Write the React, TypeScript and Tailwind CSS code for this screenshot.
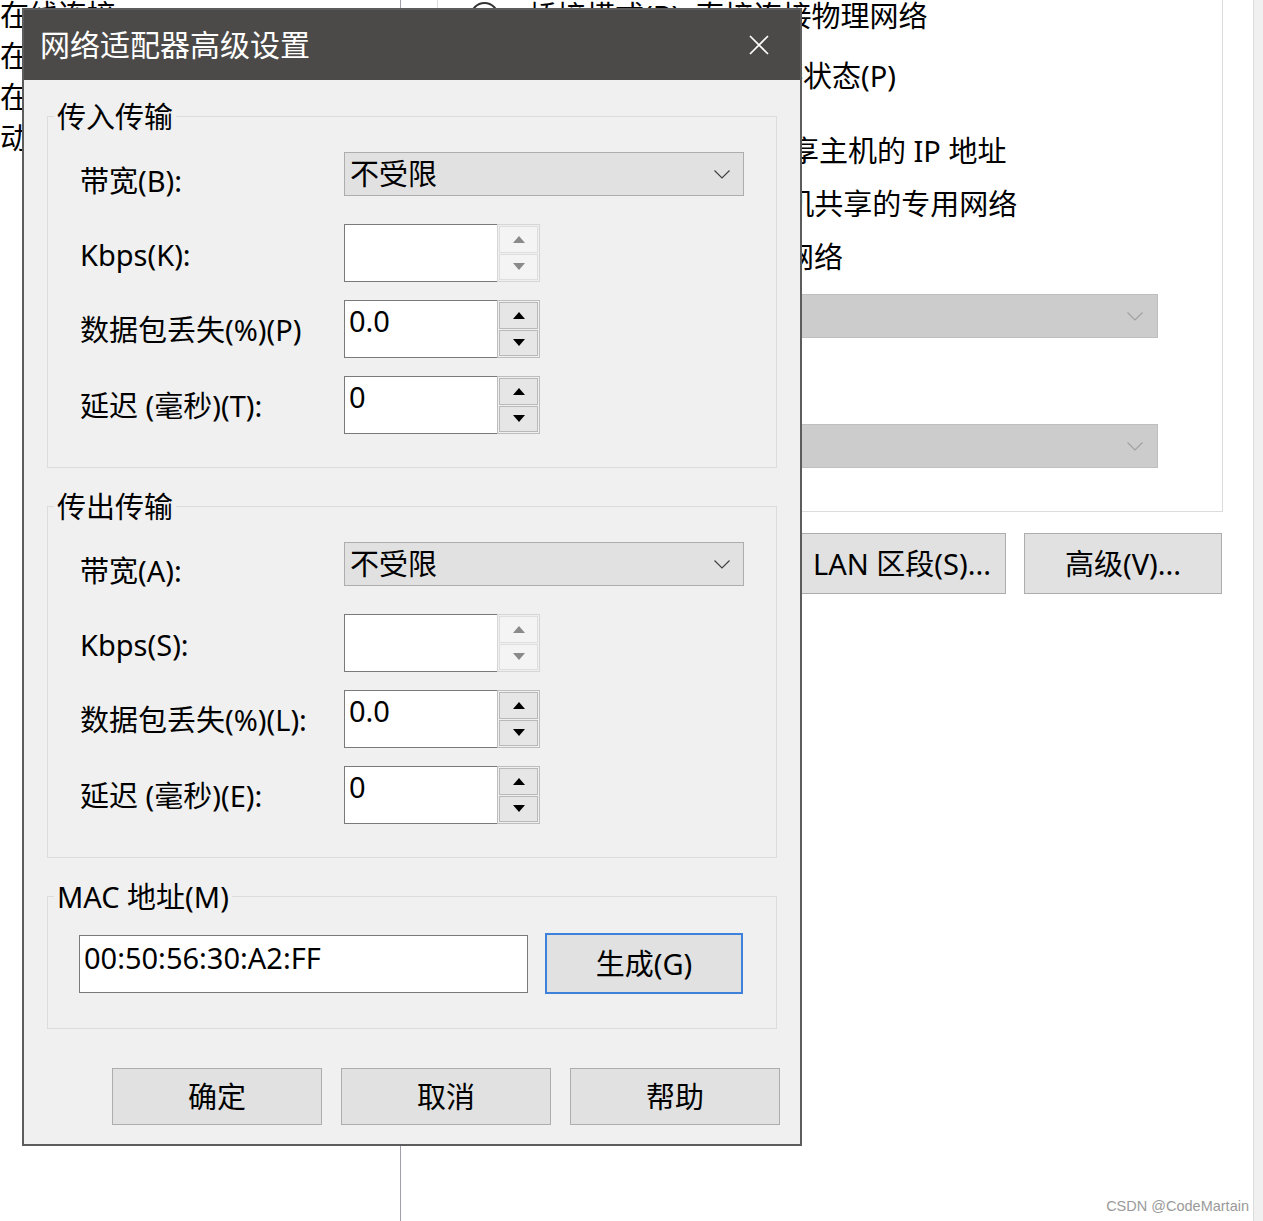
import type { ReactNode } from "react";

const labelCls = "w-[264px] shrink-0 text-[29px] leading-[38px] text-black whitespace-nowrap";

function Chevron({ color }: { color: string }) {
  return (
    <svg width="16" height="9" viewBox="0 0 16 9">
      <path d="M0.5 0.5 L8 8 L15.5 0.5" fill="none" stroke={color} strokeWidth="1.1" />
    </svg>
  );
}

function Arrow({ up, color }: { up?: boolean; color: string }) {
  return (
    <svg width="12" height="7" viewBox="0 0 12 7">
      <path d={up ? "M0 7 L6 0 L12 7Z" : "M0 0 L6 7 L12 0Z"} fill={color} />
    </svg>
  );
}

function Combo({ value }: { value: string }) {
  return (
    <div className="flex h-[44px] w-[400px] items-center justify-between border border-[#adadad] bg-[#e1e1e1] pl-[5px] pr-[13px]">
      <span className="text-[29px] leading-[38px] text-black">{value}</span>
      <Chevron color="#3c3c3c" />
    </div>
  );
}

function Spin({ value, disabled }: { value?: string; disabled?: boolean }) {
  const btn = disabled ? "border-[#dedede] bg-[#f4f4f4]" : "border-[#b9b9b9] bg-[#e6e6e6]";
  const arrow = disabled ? "#8a8a8a" : "#000";
  return (
    <div className="flex h-[58px] w-[196px]">
      <div className="w-[153px] border border-r-0 border-[#7a7a7a] bg-white pl-[4px] text-[29px] leading-[40px] text-black">
        {value}
      </div>
      <div
        className={`flex flex-1 flex-col gap-[1px] border p-[1px] ${
          disabled ? "border-[#d6d6d6]" : "border-[#bdbdbd]"
        }`}
      >
        <div className={`flex flex-1 items-center justify-center border ${btn}`}>
          <Arrow up color={arrow} />
        </div>
        <div className={`flex flex-1 items-center justify-center border ${btn}`}>
          <Arrow color={arrow} />
        </div>
      </div>
    </div>
  );
}

function Row({ label, labelCls: lc, className, children }: { label: string; labelCls: string; className: string; children: ReactNode }) {
  return (
    <div className={`flex items-start ${className}`}>
      <div className={`${labelCls} ${lc}`}>{label}</div>
      {children}
    </div>
  );
}

function Group({ title, className, children }: { title: string; className: string; children: ReactNode }) {
  return (
    <div className={`relative mx-[23px] border border-[#dcdcdc] ${className}`}>
      <span className="absolute -top-[18px] left-[6px] bg-[#f0f0f0] px-[3px] text-[29px] leading-[36px] text-black">
        {title}
      </span>
      {children}
    </div>
  );
}

function Transfer({ title, className, keys }: { title: string; className: string; keys: [string, string, string, string] }) {
  return (
    <Group title={title} className={`flex flex-col pl-[32px] pt-[35px] pb-[33px] ${className}`}>
      <Row label={`带宽(${keys[0]}):`} labelCls="mt-[10px]" className="h-[44px]">
        <Combo value="不受限" />
      </Row>
      <Row label={`Kbps(${keys[1]}):`} labelCls="mt-[12px]" className="mt-[28px] h-[58px]">
        <Spin disabled />
      </Row>
      <Row label={`数据包丢失(%)(${keys[2]})${keys[2] === "P" ? "" : ":"}`} labelCls="mt-[11px]" className="mt-[18px] h-[58px]">
        <Spin value="0.0" />
      </Row>
      <Row label={`延迟 (毫秒)(${keys[3]}):`} labelCls="mt-[11px]" className="mt-[18px] h-[58px]">
        <Spin value="0" />
      </Row>
    </Group>
  );
}

function Dialog() {
  return (
    <div className="absolute left-[22px] top-[8px] w-[780px] border-2 border-[#5c5c5c]">
      <div className="flex h-[70px] items-center justify-between bg-[#4c4a48] pl-[16px] pr-[31px]">
        <span className="text-[30px] leading-[40px] text-white">网络适配器高级设置</span>
        <svg width="20" height="20" viewBox="0 0 20 20">
          <path d="M1 1 L19 19 M19 1 L1 19" stroke="#fff" strokeWidth="1.7" />
        </svg>
      </div>
      <div className="flex flex-col bg-[#f0f0f0] pb-[19px]">
        <Transfer title="传入传输" className="mt-[36px]" keys={["B", "K", "P", "T"]} />
        <Transfer title="传出传输" className="mt-[38px]" keys={["A", "S", "L", "E"]} />
        <Group title="MAC 地址(M)" className="mt-[38px] pl-[31px] pt-[36px] pb-[34px]">
          <div className="flex items-center gap-[17px]">
            <div className="h-[58px] w-[449px] border border-[#7a7a7a] bg-white pl-[4px] pt-[2px] text-[29px] leading-[40px] text-black">
              00:50:56:30:A2:FF
            </div>
            <button className="flex h-[61px] w-[198px] items-center justify-center border-2 border-[#3f80d8] bg-[#e1e1e1] text-[29px] text-black">
              生成(G)
            </button>
          </div>
        </Group>
        <div className="mt-[39px] flex justify-end gap-[19px] pr-[20px]">
          {["确定", "取消", "帮助"].map((t) => (
            <button
              key={t}
              className="flex h-[57px] w-[210px] items-center justify-center border border-[#adadad] bg-[#e1e1e1] text-[29px] text-black"
            >
              {t}
            </button>
          ))}
        </div>
      </div>
    </div>
  );
}

function Radio() {
  return <span className="h-[29px] w-[29px] shrink-0 rounded-full border-2 border-[#333]" />;
}

function BgRow({ text, className, check }: { text: string; className?: string; check?: boolean }) {
  return (
    <div className={`flex h-[38px] items-center gap-[29px] whitespace-nowrap text-[29px] text-black ${className ?? ""}`}>
      {check ? <span className="ml-[42px] h-[26px] w-[26px] shrink-0 border border-[#333]" /> : <Radio />}
      <span className={check ? "ml-[4px]" : ""}>{text}</span>
    </div>
  );
}

function BgSelect({ className }: { className: string }) {
  return (
    <div className={`ml-[58px] flex h-[44px] w-[630px] items-center justify-end border border-[#bfbfbf] bg-[#cccccc] pr-[14px] ${className}`}>
      <Chevron color="#a0a0a0" />
    </div>
  );
}

export default function App() {
  return (
    <div className="relative flex h-[1221px] w-full overflow-hidden bg-white font-['Noto_Sans','Noto_Sans_CJK_SC',sans-serif]">
      <div className="w-[401px] shrink-0 border-r border-[#a0a0a8]">
        <div className="-mt-[6px] flex flex-col whitespace-nowrap text-[29px] leading-[41px] text-black">
          <span>在线连接</span>
          <span>在线连接</span>
          <span>在线连接</span>
          <span>动态分配</span>
        </div>
      </div>
      <div className="flex-1">
        <div className="-mt-[30px] ml-[36px] w-[786px] border border-[#dcdcdc] pl-[32px] pr-[63px] pt-[26px] pb-[43px]">
          <BgRow text="桥接模式(B): 直接连接物理网络" />
          <BgRow text="复制物理网络连接状态(P)" check className="mt-[22px]" />
          <BgRow text="NAT 模式(N): 用于共享主机的 IP 地址" className="mt-[37px]" />
          <BgRow text="仅主机模式(H): 与主机共享的专用网络" className="mt-[15px]" />
          <BgRow text="自定义(U): 特定虚拟网络" className="mt-[15px]" />
          <BgSelect className="mt-[18px]" />
          <BgSelect className="mt-[86px]" />
        </div>
        <div className="ml-[36px] mt-[21px] flex w-[786px] justify-end gap-[18px] pr-[1px]">
          <button className="flex h-[61px] w-[208px] items-center justify-center whitespace-nowrap border border-[#adadad] bg-[#e1e1e1] text-[29px] text-black">
            LAN 区段(S)...
          </button>
          <button className="flex h-[61px] w-[198px] items-center justify-center border border-[#adadad] bg-[#e1e1e1] text-[29px] text-black">
            高级(V)...
          </button>
        </div>
      </div>
      <div className="w-[10px] shrink-0 border-l border-[#dcdcdc] bg-[#f0f0f0]" />
      <Dialog />
      <span className="absolute bottom-[5px] right-[14px] font-['Liberation_Sans',sans-serif] text-[14.5px] leading-[20px] text-[#9a9a9a]">
        CSDN @CodeMartain
      </span>
    </div>
  );
}
